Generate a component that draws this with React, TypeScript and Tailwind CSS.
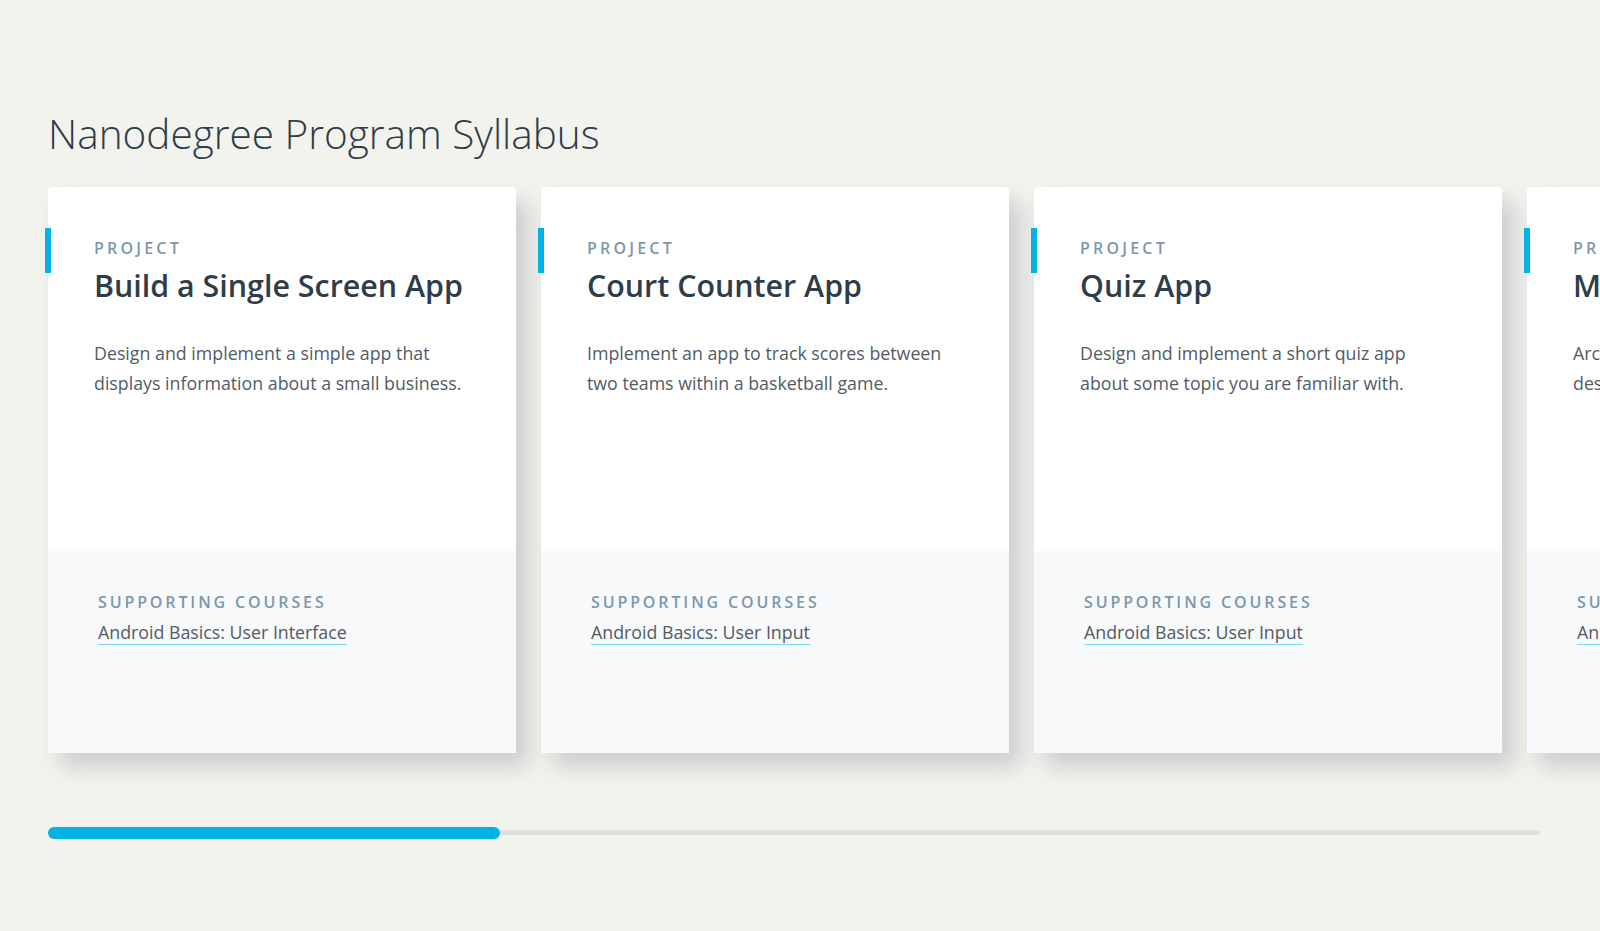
const projects = [
  {
    title: "Build a Single Screen App",
    desc: "Design and implement a simple app that displays information about a small business.",
    course: "Android Basics: User Interface",
  },
  {
    title: "Court Counter App",
    desc: "Implement an app to track scores between two teams within a basketball game.",
    course: "Android Basics: User Input",
  },
  {
    title: "Quiz App",
    desc: "Design and implement a short quiz app about some topic you are familiar with.",
    course: "Android Basics: User Input",
  },
  {
    title: "Musical Structure App",
    desc: "Architect the layout of a music app and design its screens before you build it.",
    course: "Android Basics: Multiscreen Apps",
  },
];

function ProjectCard({ title, desc, course }: { title: string; desc: string; course: string }) {
  return (
    <div className="relative flex h-[566px] w-[468px] shrink-0 flex-col rounded-t-[4px] bg-white shadow-[12px_14px_22px_0_rgba(46,61,73,0.2)]">
      <span className="absolute -left-[3px] top-[41px] h-[45px] w-[6px] bg-[#02b3e4]" />
      <div className="h-[364px] pl-[46px] pt-[51px]">
        <p className="text-[16px] leading-[20px] font-semibold tracking-[0.2em] text-[#7d97ad]">PROJECT</p>
        <h3 className="mt-[10px] text-[30.4px] leading-[36px] font-semibold text-[#2e3d49]">{title}</h3>
        <p className="mt-[34px] w-[372px] text-[17.8px] leading-[30px] text-[#525c65]">{desc}</p>
      </div>
      <div className="flex-1 bg-[#f7f9fa] pl-[50px] pt-[41px]">
        <p className="text-[16px] leading-[20px] font-semibold tracking-[0.18em] text-[#7d97ad]">SUPPORTING COURSES</p>
        <a className="mt-[8px] inline-block border-b border-[#7fd6ef] text-[17.8px] leading-[24px] text-[#525c65]">
          {course}
        </a>
      </div>
    </div>
  );
}

export default function App() {
  return (
    <div className="h-screen w-full overflow-hidden bg-[#f3f3ee] pl-[48px] pt-[110px] font-['Open_Sans',sans-serif]">
      <h2 className="text-[40.5px] leading-[48px] font-light text-[#2e3d49]">Nanodegree Program Syllabus</h2>
      <div className="mt-[29px] flex gap-[25px]">
        {projects.map((p) => (
          <ProjectCard key={p.title} {...p} />
        ))}
      </div>
      <div className="relative mt-[77px] h-[5px] w-[1492px] rounded-full bg-[#dedfdf]">
        <div className="absolute left-0 top-1/2 h-3 w-[452px] -translate-y-1/2 rounded-full bg-[#02b3e4]" />
      </div>
    </div>
  );
}
